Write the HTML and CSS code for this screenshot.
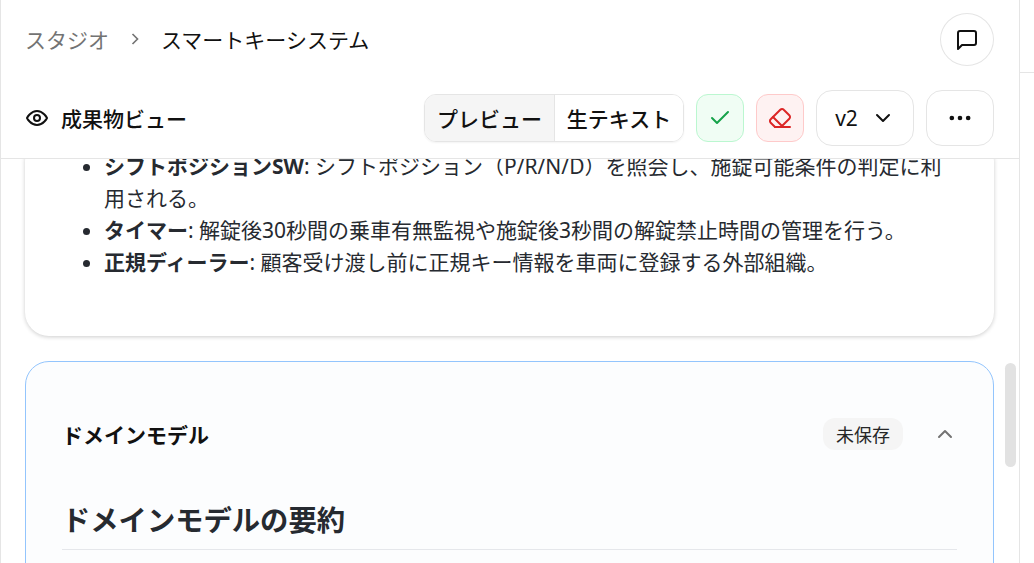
FILE: index.html
```html
<!DOCTYPE html>
<html lang="ja">
<head>
    <meta charset="UTF-8">
    <meta name="viewport" content="width=device-width, initial-scale=1.0">
    <title>成果物ビュー</title>
    <link rel="stylesheet" href="styles.css">
</head>
<body>
    <div class="app">
        <div class="panel">
            <div class="header">
                <div class="top-row">
                    <div class="crumbs">
                        <span class="crumb-root">スタジオ</span>
                        <svg class="crumb-sep" viewBox="0 0 24 24"><path d="m9 18 6-6-6-6"/></svg>
                        <span class="crumb-current">スマートキーシステム</span>
                    </div>
                    <button class="round-btn">
                        <svg class="icon" viewBox="0 0 24 24"><path d="M21 15a2 2 0 0 1-2 2H7l-4 4V5a2 2 0 0 1 2-2h14a2 2 0 0 1 2 2z"/></svg>
                    </button>
                </div>
                <div class="tool-row">
                    <div class="view-title">
                        <svg class="icon" viewBox="0 0 24 24"><path d="M2 12s3.5-7 10-7 10 7 10 7-3.5 7-10 7-10-7-10-7z"/><circle cx="12" cy="12" r="3"/></svg>
                        <span>成果物ビュー</span>
                    </div>
                    <div class="tools">
                        <div class="segment">
                            <button class="seg-btn active">プレビュー</button>
                            <button class="seg-btn">生テキスト</button>
                        </div>
                        <button class="square-btn ok">
                            <svg class="icon" viewBox="0 0 24 24"><path d="M20 6 9 17l-5-5"/></svg>
                        </button>
                        <button class="square-btn danger">
                            <svg class="icon" viewBox="0 0 24 24"><path d="m7 21-4.3-4.3c-1-1-1-2.5 0-3.4l9.6-9.6c1-1 2.5-1 3.4 0l5.6 5.6c1 1 1 2.5 0 3.4L13 21"/><path d="M22 21H7"/><path d="m5 11 9 9"/></svg>
                        </button>
                        <button class="big-btn version">
                            <span>v2</span>
                            <svg class="icon" viewBox="0 0 24 24"><path d="m6 9 6 6 6-6"/></svg>
                        </button>
                        <button class="big-btn more">
                            <svg class="icon dots" viewBox="0 0 24 24"><circle cx="5" cy="12" r="1"/><circle cx="12" cy="12" r="1"/><circle cx="19" cy="12" r="1"/></svg>
                        </button>
                    </div>
                </div>
            </div>
            <div class="scroll">
                <div class="scroll-inner">
                    <div class="card">
                        <ul class="term-list">
                            <li><strong>シフトポジションSW</strong>: シフトポジション（P/R/N/D）を照会し、施錠可能条件の判定に利用される。</li>
                            <li><strong>タイマー</strong>: 解錠後30秒間の乗車有無監視や施錠後3秒間の解錠禁止時間の管理を行う。</li>
                            <li><strong>正規ディーラー</strong>: 顧客受け渡し前に正規キー情報を車両に登録する外部組織。</li>
                        </ul>
                    </div>
                    <div class="card card-edit">
                        <div class="card-head">
                            <span class="card-title">ドメインモデル</span>
                            <span class="badge">未保存</span>
                            <svg class="icon chevron" viewBox="0 0 24 24"><path d="m18 15-6-6-6 6"/></svg>
                        </div>
                        <h2 class="doc-title">ドメインモデルの要約</h2>
                    </div>
                </div>
                <div class="scrollbar"></div>
            </div>
        </div>
        <div class="side">
            <div class="side-top"></div>
        </div>
    </div>
</body>
</html>
```

FILE: styles.css
```css
* {
    box-sizing: border-box;
}
body {
    margin: 0;
    background: #fff;
    color: #111;
    font-family: "Noto Sans", "Noto Sans CJK JP", sans-serif;
}
button {
    font-family: inherit;
    color: inherit;
    padding: 0;
    background: #fff;
    cursor: pointer;
}
.app {
    display: flex;
    height: 563px;
    overflow: hidden;
}
.panel {
    width: 1020px;
    display: flex;
    flex-direction: column;
    border-left: 1px solid #e5e5e5;
    border-right: 1px solid #e5e5e5;
}
.side {
    flex: 1;
}
.side-top {
    height: 73px;
    border-bottom: 1px solid #e5e5e5;
}
.icon {
    width: 24px;
    height: 24px;
    fill: none;
    stroke: currentColor;
    stroke-width: 2;
    stroke-linecap: round;
    stroke-linejoin: round;
    flex: none;
}
.header {
    flex: none;
    height: 159px;
    padding: 13px 25px 0 24px;
    border-bottom: 1px solid #e5e5e5;
}
.top-row {
    display: flex;
    align-items: center;
    justify-content: space-between;
    height: 53px;
}
.crumbs {
    display: flex;
    align-items: center;
    padding-bottom: 2px;
    font-size: 21px;
}
.crumb-root {
    color: #737373;
}
.crumb-sep {
    width: 20px;
    height: 20px;
    margin: 0 16px;
    fill: none;
    stroke: #737373;
    stroke-width: 2;
}
.round-btn {
    width: 54px;
    height: 53px;
    border: 1px solid #e5e5e5;
    border-radius: 50%;
    display: flex;
    align-items: center;
    justify-content: center;
}
.tool-row {
    display: flex;
    align-items: center;
    justify-content: space-between;
    height: 56px;
    margin-top: 24px;
}
.view-title {
    display: flex;
    align-items: center;
    gap: 12px;
    font-size: 21px;
    font-weight: 500;
}
.tools {
    display: flex;
    align-items: center;
    gap: 12px;
}
.segment {
    display: flex;
    height: 48px;
    border: 1px solid #e5e5e5;
    border-radius: 12px;
    overflow: hidden;
    box-shadow: 0 1px 2px rgba(0, 0, 0, 0.05);
}
.seg-btn {
    width: 128px;
    border: none;
    font-size: 21px;
    font-weight: 500;
}
.seg-btn.active {
    width: 130px;
    background: #f5f5f5;
    border-right: 1px solid #e5e5e5;
}
.square-btn {
    width: 48px;
    height: 48px;
    border-radius: 12px;
    border: 1px solid;
    display: flex;
    align-items: center;
    justify-content: center;
}
.ok {
    background: #f0fdf4;
    border-color: #bbf7d0;
    color: #16a34a;
}
.danger {
    background: #fef2f2;
    border-color: #fecaca;
    color: #dc2626;
}
.big-btn {
    height: 56px;
    border: 1px solid #e5e5e5;
    border-radius: 16px;
    display: flex;
    align-items: center;
    justify-content: center;
    font-size: 21px;
}
.version {
    width: 98px;
    gap: 13px;
}
.more {
    width: 68px;
}
.dots {
    width: 28px;
    height: 28px;
    fill: currentColor;
}
.scroll {
    flex: 1;
    position: relative;
    overflow: hidden;
    min-height: 0;
}
.scroll-inner {
    margin-top: -21px;
    padding: 0 25px 0 24px;
}
.card {
    background: #fff;
    border-radius: 24px;
    box-shadow: 0 1px 4px rgba(0, 0, 0, 0.2);
}
.term-list {
    margin: 0;
    padding: 12px 37px 58px 79px;
    font-size: 21px;
    line-height: 32px;
    color: #262a30;
}
.term-list strong {
    font-weight: 700;
}
.card-edit {
    margin-top: 25px;
    padding: 0 36px;
    height: 300px;
    background: #fcfdfe;
    border: 1px solid #93c5fd;
    box-shadow: none;
}
.card-head {
    display: flex;
    align-items: center;
    padding-top: 55px;
    height: 88px;
}
.card-title {
    font-size: 21px;
    font-weight: 700;
    margin-right: auto;
}
.badge {
    background: #f5f5f5;
    border-radius: 12px;
    width: 80px;
    height: 32px;
    display: flex;
    align-items: center;
    justify-content: center;
    font-size: 18px;
    color: #262626;
}
.chevron {
    color: #737373;
    margin-left: 30px;
}
.doc-title {
    margin: 50px 0 0;
    padding-bottom: 8px;
    font-size: 28.3px;
    line-height: 41px;
    font-weight: 700;
    color: #262a30;
    border-bottom: 1px solid #e5e7eb;
}
.scrollbar {
    position: absolute;
    top: 204px;
    right: 3px;
    width: 11px;
    height: 104px;
    border-radius: 6px;
    background: #e2e2e2;
}
```
